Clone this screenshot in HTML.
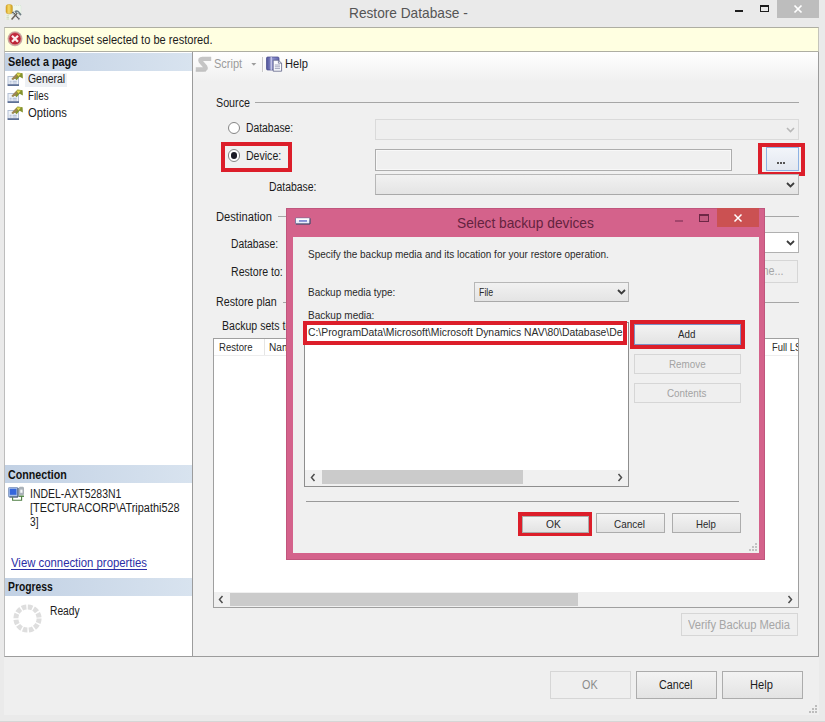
<!DOCTYPE html>
<html>
<head>
<meta charset="utf-8">
<title>Restore Database</title>
<style>
html,body{margin:0;padding:0;}
body{width:825px;height:722px;overflow:hidden;background:#eaeaea;font-family:"Liberation Sans",sans-serif;font-size:12px;color:#1c1c1c;position:relative;}
.a{position:absolute;white-space:nowrap;}
.t{position:absolute;white-space:nowrap;transform-origin:0 50%;}
.btn{position:absolute;box-sizing:border-box;border:1px solid #acacac;background:linear-gradient(#f3f3f3,#e3e3e3);}
.btn.dis{border-color:#d6d6d6;background:#efefef;}
.combo{position:absolute;box-sizing:border-box;border:1px solid #b7b7b7;border-bottom-color:#a9a9a9;background:linear-gradient(#f1f1f1,#e4e4e4);}
.combo.dis{border-color:#dadada;background:#efefef;}
.hr{position:absolute;height:1px;background:#a6a6a6;}
.radio{width:12.6px;height:12.6px;box-sizing:border-box;border:1px solid #858585;border-radius:50%;background:#fff;}
.radio i{position:absolute;left:2px;top:2px;width:6.6px;height:6.6px;border-radius:50%;background:#1c1c26;}
.red{position:absolute;box-sizing:border-box;border:4px solid #dc1e2a;}
.hdr{position:absolute;left:5px;width:187px;height:18px;background:linear-gradient(90deg,#c2d1e4,#d8e3ef);}
</style>
</head>
<body>

<!-- window client area -->
<div class="a" style="left:4px;top:27px;width:815px;height:688px;background:#efefef;"></div>
<div class="a" style="left:0;top:721px;width:825px;height:1px;background:#d6d6d6;"></div>

<!-- ===== title bar ===== -->
<svg class="a" style="left:4px;top:3px" width="20" height="19" viewBox="0 0 20 19">
  <rect x="8" y="2.5" width="9" height="9" fill="#eef6ec" stroke="#cfe0cf" stroke-width="0.6" stroke-dasharray="1 1"/>
  <rect x="1.5" y="11.5" width="6" height="5" fill="#eef4e6"/>
  <path d="M2.5 12.8 H5 M2.5 14.5 H5 M2.5 16 H5" stroke="#c8d4b8" stroke-width="0.8"/>
  <defs><linearGradient id="cy" x1="0" x2="1"><stop offset="0" stop-color="#d9a21e"/><stop offset="0.45" stop-color="#f6dc6c"/><stop offset="1" stop-color="#cf9a1c"/></linearGradient></defs>
  <rect x="2" y="1.6" width="6.4" height="9.2" rx="2.2" fill="url(#cy)" stroke="#c79a2a" stroke-width="0.5"/>
  <path d="M8.6 9 L15.6 16.6" stroke="#4c4f55" stroke-width="1.7" stroke-dasharray="1.2 0.5"/>
  <path d="M7.6 16.6 L13.6 9.6" stroke="#6b6257" stroke-width="1.5"/>
  <path d="M10.4 8.2 Q13.4 6 16 9.4 L17.6 11.6 L16.2 12.8 L14.6 10.6 Q13 9.4 11.4 10 Z" fill="#6f7f86"/>
  <path d="M12.6 9.2 Q13.6 8.6 14.6 9.8 L13.4 10.6 Z" fill="#dfe7ea"/>
</svg>
<div class="a" style="left:735px;top:10px;width:8px;height:2px;background:#1e1e1e;"></div>
<div class="a" style="left:760px;top:5px;width:9px;height:7px;box-sizing:border-box;border:1px solid #1e1e1e;border-top-width:2px;"></div>
<div class="a" style="left:777px;top:0;width:42px;height:18px;background:#bdbdbd;"></div>
<svg class="a" style="left:793px;top:4px" width="10" height="10" viewBox="0 0 10 10"><path d="M1.5 1.5 L8.5 8.5 M8.5 1.5 L1.5 8.5" stroke="#fff" stroke-width="1.7"/></svg>

<!-- ===== banner ===== -->
<div class="a" style="left:4px;top:27px;width:815px;height:25px;box-sizing:border-box;border:1px solid #aeaea2;border-left-color:#c4c4bb;border-right-color:#c4c4bb;background:#ffffe1;"></div>
<svg class="a" style="left:7px;top:31px" width="16" height="16" viewBox="0 0 16 16">
  <defs><radialGradient id="er" cx="0.5" cy="0.45" r="0.6"><stop offset="0" stop-color="#d23a4c"/><stop offset="1" stop-color="#b0162a"/></radialGradient></defs>
  <circle cx="8" cy="7.7" r="7.5" fill="#c9ada6"/>
  <circle cx="8" cy="7.7" r="6.1" fill="url(#er)" stroke="#d98a8c" stroke-width="0.8"/>
  <path d="M5 4.7 L11 10.7 M11 4.7 L5 10.7" stroke="#fdeeee" stroke-width="2.2"/>
</svg>

<!-- ===== left panel ===== -->
<div class="a" style="left:4px;top:52px;width:189px;height:605px;box-sizing:border-box;border:1px solid #9c9c9c;border-left-color:#bdbdbd;border-top:none;background:#fff;"></div>
<div class="hdr" style="top:53px;"></div>
<div class="a" style="left:25px;top:73px;width:42px;height:14px;background:#edf0f4;"></div>
<div class="hdr" style="top:465px;"></div>
<div class="hdr" style="top:578px;"></div>

<!-- ===== right panel ===== -->
<div class="a" style="left:193px;top:52px;width:626px;height:605px;box-sizing:border-box;border-right:1px solid #9c9c9c;border-bottom:1px solid #9c9c9c;background:#f0f0f0;"></div>
<div class="a" style="left:193px;top:52px;width:625px;height:30px;background:linear-gradient(#ffffff,#f0f0f0);"></div>

<svg class="a" style="left:7px;top:72px" width="17" height="15" viewBox="0 0 17 15">
  <rect x="1" y="4.5" width="10.5" height="8.5" fill="#eef2f8" stroke="#b4c0d4" stroke-width="1"/>
  <rect x="0.6" y="12.4" width="11.4" height="1.4" fill="#3f5581"/>
  <path d="M2.6 9.3 H4.6 M5.6 9.3 H9.8 M2.6 11 H4.6 M5.6 11 H9.8" stroke="#93a5c4" stroke-width="0.7"/>
  <path d="M4.5 7 L9 2.2 L10.5 0.6 L15.6 1.2 L15.9 6.6 L12.6 4.8 L9.6 8.2 L8 6.4 L6 7.8 Z" fill="#85932f"/>
  <path d="M4.5 7 L9 2.2 L10.6 4 L8 6.4 L6 7.8 Z" fill="#a08455"/>
  <path d="M9.4 1.6 L14 1.4 L11.4 4.6 Z" fill="#e9db55"/>
</svg>
<svg class="a" style="left:7px;top:89px" width="17" height="15" viewBox="0 0 17 15">
  <rect x="1" y="4.5" width="10.5" height="8.5" fill="#eef2f8" stroke="#b4c0d4" stroke-width="1"/>
  <rect x="0.6" y="12.4" width="11.4" height="1.4" fill="#3f5581"/>
  <path d="M2.6 9.3 H4.6 M5.6 9.3 H9.8 M2.6 11 H4.6 M5.6 11 H9.8" stroke="#93a5c4" stroke-width="0.7"/>
  <path d="M4.5 7 L9 2.2 L10.5 0.6 L15.6 1.2 L15.9 6.6 L12.6 4.8 L9.6 8.2 L8 6.4 L6 7.8 Z" fill="#85932f"/>
  <path d="M4.5 7 L9 2.2 L10.6 4 L8 6.4 L6 7.8 Z" fill="#a08455"/>
  <path d="M9.4 1.6 L14 1.4 L11.4 4.6 Z" fill="#e9db55"/>
</svg>
<svg class="a" style="left:7px;top:106px" width="17" height="15" viewBox="0 0 17 15">
  <rect x="1" y="4.5" width="10.5" height="8.5" fill="#eef2f8" stroke="#b4c0d4" stroke-width="1"/>
  <rect x="0.6" y="12.4" width="11.4" height="1.4" fill="#3f5581"/>
  <path d="M2.6 9.3 H4.6 M5.6 9.3 H9.8 M2.6 11 H4.6 M5.6 11 H9.8" stroke="#93a5c4" stroke-width="0.7"/>
  <path d="M4.5 7 L9 2.2 L10.5 0.6 L15.6 1.2 L15.9 6.6 L12.6 4.8 L9.6 8.2 L8 6.4 L6 7.8 Z" fill="#85932f"/>
  <path d="M4.5 7 L9 2.2 L10.6 4 L8 6.4 L6 7.8 Z" fill="#a08455"/>
  <path d="M9.4 1.6 L14 1.4 L11.4 4.6 Z" fill="#e9db55"/>
</svg>
<svg class="a" style="left:8px;top:486px" width="17" height="16" viewBox="0 0 17 16">
  <rect x="0.5" y="1.5" width="9.5" height="9.5" rx="0.8" fill="#a9c0e6" stroke="#7d94bd" stroke-width="0.8"/>
  <rect x="1.8" y="2.8" width="6.6" height="6" fill="#3566dc"/>
  <path d="M10 2 V11 H1.5" stroke="#3b4a63" stroke-width="1" fill="none"/>
  <rect x="11.3" y="1.2" width="4.2" height="7.6" rx="0.6" fill="#aab2ba" stroke="#8d959d" stroke-width="0.6"/>
  <rect x="12.3" y="3.6" width="2.2" height="3.2" fill="#f4f6f8"/>
  <path d="M11 10.2 H16" stroke="#3f7a35" stroke-width="1.3"/>
  <path d="M4.6 11.2 V14.2 H13.6 V10" stroke="#4f7f44" stroke-width="1.1" fill="none"/>
</svg>
<svg class="a" style="left:13px;top:604px" width="29" height="29" viewBox="0 0 29 29">
  <circle cx="14.5" cy="14.5" r="11.6" fill="none" stroke="#dedede" stroke-width="5" stroke-dasharray="4.6 1.47"/>
</svg>
<!-- toolbar icons -->
<svg class="a" style="left:195px;top:56px" width="17" height="16" viewBox="0 0 17 16">
  <path d="M16.2 2.8 H7.4 Q4.2 2.8 5.8 5.6 L10.2 10.6 Q11.8 13.4 8.6 13.4 H0.8" fill="none" stroke="#c5c5c5" stroke-width="4.2" stroke-linejoin="round"/>
  <path d="M0.8 15 H11" stroke="#bcbcbc" stroke-width="1"/>
</svg>
<svg class="a" style="left:251px;top:63px" width="6" height="3" viewBox="0 0 6 3"><path d="M0.3 0 H5.3 L2.8 2.8 Z" fill="#9d9d9d"/></svg>
<div class="a" style="left:262px;top:57px;width:1px;height:15px;background:#c9c9c9;"></div>
<div class="a" style="left:263px;top:57px;width:1px;height:15px;background:#fbfbfb;"></div>
<svg class="a" style="left:266px;top:56px" width="17" height="16" viewBox="0 0 17 16">
  <defs><linearGradient id="bk" x1="0" x2="1"><stop offset="0" stop-color="#4f5299"/><stop offset="0.45" stop-color="#9094cf"/><stop offset="1" stop-color="#6266ad"/></linearGradient></defs>
  <rect x="0.5" y="1" width="12.5" height="13" rx="1.2" fill="url(#bk)" stroke="#45488a" stroke-width="0.7"/>
  <path d="M7.2 4.2 H12.4 L15.6 7.2 V15.2 H7.2 Z" fill="#fafbfe" stroke="#5d6286" stroke-width="0.8"/>
  <path d="M12.4 4.2 V7.2 H15.6" fill="none" stroke="#5d6286" stroke-width="0.7"/>
  <path d="M8.8 9 H14 M8.8 10.8 H14 M8.8 12.6 H14" stroke="#8c90ac" stroke-width="0.8"/>
  <rect x="4.6" y="1" width="1.2" height="13" fill="#e9eaf6" opacity="0.75"/>
</svg>
<!-- resize grips -->
<svg class="a" style="left:808px;top:704px" width="10" height="10" viewBox="0 0 10 10"><g fill="#bdbdbd"><rect x="7" y="1" width="2" height="2"/><rect x="4" y="4" width="2" height="2"/><rect x="7" y="4" width="2" height="2"/><rect x="1" y="7" width="2" height="2"/><rect x="4" y="7" width="2" height="2"/><rect x="7" y="7" width="2" height="2"/></g></svg>

<!-- source group -->
<div class="hr" style="left:255px;top:102px;width:544px;"></div>
<div class="a radio" style="left:227.7px;top:121.7px;"></div>
<div class="combo dis" style="left:375px;top:119px;width:424px;height:21px;"></div>
<svg class="a" style="left:786px;top:127px" width="9" height="6" viewBox="0 0 9 6"><path d="M1 1 L4.5 4.5 L8 1" stroke="#b8b8b8" stroke-width="1.6" fill="none"/></svg>

<div class="red" style="left:221.2px;top:141.7px;width:70.6px;height:29.9px;"></div>
<div class="a radio" style="left:227.7px;top:149px;"><i></i></div>
<div class="a" style="left:375px;top:149px;width:357px;height:22px;box-sizing:border-box;border:1px solid #adadad;background:#f0f0f0;box-shadow:inset 0 0 0 1px #f8f8f8;"></div>
<div class="red" style="left:758px;top:142.5px;width:47px;height:33.5px;"></div>
<div class="btn" style="left:766px;top:147px;width:33px;height:24px;border-color:#8db2e3;background:linear-gradient(#f2f5fa,#e3e8f0);"></div>
<div class="a" style="left:777px;top:162px;width:1.6px;height:1.8px;background:#555;box-shadow:3px 0 #555,6px 0 #555;"></div>

<div class="combo" style="left:375px;top:174px;width:424px;height:21px;"></div>
<svg class="a" style="left:786px;top:182px" width="9" height="6" viewBox="0 0 9 6"><path d="M1 1 L4.5 4.5 L8 1" stroke="#3c3c3c" stroke-width="1.8" fill="none"/></svg>

<!-- destination group -->
<div class="hr" style="left:278px;top:216px;width:521px;"></div>
<div class="a" style="left:375px;top:232px;width:424px;height:21px;box-sizing:border-box;border:1px solid #b0b0b0;background:#fff;"></div>
<svg class="a" style="left:786px;top:240px" width="9" height="6" viewBox="0 0 9 6"><path d="M1 1 L4.5 4.5 L8 1" stroke="#3c3c3c" stroke-width="1.8" fill="none"/></svg>
<div class="btn dis" style="left:700px;top:260px;width:98px;height:23px;"></div>

<!-- restore plan -->
<div class="hr" style="left:283px;top:302px;width:516px;"></div>
<div class="a" style="left:213px;top:338px;width:586px;height:270px;box-sizing:border-box;border:1px solid #9f9f9f;background:#fff;"></div>
<div class="a" style="left:264px;top:339px;width:1px;height:17px;background:#e5e5e5;"></div>
<div class="a" style="left:214px;top:355px;width:584px;height:1px;background:#ededed;"></div>
<!-- grid h-scrollbar -->
<div class="a" style="left:214px;top:592px;width:584px;height:15px;background:#f0f0f0;"></div>
<div class="a" style="left:230px;top:593px;width:348px;height:13px;background:#cbcbcb;"></div>
<svg class="a" style="left:218px;top:595px" width="6" height="9" viewBox="0 0 6 9"><path d="M4.5 1 L1.5 4.5 L4.5 8" stroke="#4d4d4d" stroke-width="1.5" fill="none"/></svg>
<svg class="a" style="left:787px;top:595px" width="6" height="9" viewBox="0 0 6 9"><path d="M1.5 1 L4.5 4.5 L1.5 8" stroke="#4d4d4d" stroke-width="1.5" fill="none"/></svg>

<div class="btn dis" style="left:681px;top:613px;width:117px;height:23px;"></div>

<!-- bottom buttons -->
<div class="btn dis" style="left:550px;top:671px;width:81px;height:28px;"></div>
<div class="btn" style="left:636px;top:671px;width:81px;height:28px;"></div>
<div class="btn" style="left:722px;top:671px;width:81px;height:28px;"></div>

<div class="t" style="left:349.4px;top:4px;font-size:14.5px;line-height:18px;height:18px;transform:scaleX(0.9441);color:#555;">Restore Database -</div>
<div class="t" style="left:25.9px;top:33px;font-size:12px;line-height:15px;height:15px;transform:scaleX(0.9227);">No backupset selected to be restored.</div>
<div class="t" style="left:7.8px;top:55px;font-size:12px;line-height:15px;height:15px;transform:scaleX(0.9020);font-weight:bold;color:#111;">Select a page</div>
<div class="t" style="left:27.9px;top:72px;font-size:12px;line-height:15px;height:15px;transform:scaleX(0.8688);">General</div>
<div class="t" style="left:27.9px;top:89px;font-size:12px;line-height:15px;height:15px;transform:scaleX(0.8128);">Files</div>
<div class="t" style="left:27.9px;top:106px;font-size:12px;line-height:15px;height:15px;transform:scaleX(0.9381);">Options</div>
<div class="t" style="left:8.0px;top:468px;font-size:12px;line-height:15px;height:15px;transform:scaleX(0.8894);font-weight:bold;color:#111;">Connection</div>
<div class="t" style="left:30.3px;top:487px;font-size:12px;line-height:15px;height:15px;transform:scaleX(0.8728);">INDEL-AXT5283N1</div>
<div class="t" style="left:30.3px;top:501px;font-size:12px;line-height:15px;height:15px;transform:scaleX(0.9082);">[TECTURACORP\ATripathi528</div>
<div class="t" style="left:30.3px;top:515px;font-size:12px;line-height:15px;height:15px;transform:scaleX(0.8487);">3]</div>
<div class="t" style="left:11.4px;top:556px;font-size:12px;line-height:15px;height:15px;transform:scaleX(0.9453);color:#2b2ea6;text-decoration:underline;text-underline-offset:2px;">View connection properties</div>
<div class="t" style="left:8.0px;top:580px;font-size:12px;line-height:15px;height:15px;transform:scaleX(0.8610);font-weight:bold;color:#111;">Progress</div>
<div class="t" style="left:49.7px;top:604px;font-size:12px;line-height:15px;height:15px;transform:scaleX(0.8533);">Ready</div>
<div class="t" style="left:213.6px;top:57px;font-size:12px;line-height:15px;height:15px;transform:scaleX(0.9189);color:#9c9c9c;">Script</div>
<div class="t" style="left:284.9px;top:57px;font-size:12px;line-height:15px;height:15px;transform:scaleX(0.9276);">Help</div>
<div class="t" style="left:215.5px;top:96px;font-size:12px;line-height:15px;height:15px;transform:scaleX(0.8940);">Source</div>
<div class="t" style="left:246.2px;top:121px;font-size:12px;line-height:15px;height:15px;transform:scaleX(0.8628);">Database:</div>
<div class="t" style="left:246.2px;top:149px;font-size:12px;line-height:15px;height:15px;transform:scaleX(0.8797);">Device:</div>
<div class="t" style="left:268.7px;top:180px;font-size:12px;line-height:15px;height:15px;transform:scaleX(0.8683);">Database:</div>
<div class="t" style="left:215.6px;top:210px;font-size:12px;line-height:15px;height:15px;transform:scaleX(0.9309);">Destination</div>
<div class="t" style="left:231.2px;top:237px;font-size:12px;line-height:15px;height:15px;transform:scaleX(0.8592);">Database:</div>
<div class="t" style="left:231.2px;top:265px;font-size:12px;line-height:15px;height:15px;transform:scaleX(0.8824);">Restore to:</div>
<div class="t" style="left:215.6px;top:295px;font-size:12px;line-height:15px;height:15px;transform:scaleX(0.8935);">Restore plan</div>
<div class="t" style="left:221.6px;top:319px;font-size:12px;line-height:15px;height:15px;transform:scaleX(0.8799);">Backup sets to restore:</div>
<div class="t" style="left:733.7px;top:264px;font-size:12px;line-height:15px;height:15px;transform:scaleX(0.9015);color:#a6a6a6;">Timeline...</div>
<div class="t" style="left:687.8px;top:618px;font-size:12px;line-height:15px;height:15px;transform:scaleX(0.9324);color:#a6a6a6;">Verify Backup Media</div>
<div class="t" style="left:582.1px;top:678px;font-size:12px;line-height:15px;height:15px;transform:scaleX(0.8995);color:#8c8c8c;">OK</div>
<div class="t" style="left:659.2px;top:678px;font-size:12px;line-height:15px;height:15px;transform:scaleX(0.8967);">Cancel</div>
<div class="t" style="left:749.7px;top:678px;font-size:12px;line-height:15px;height:15px;transform:scaleX(0.9276);">Help</div>
<div class="t" style="left:218.7px;top:340px;font-size:11px;line-height:14px;height:14px;transform:scaleX(0.8694);color:#2a2a2a;">Restore</div>
<div class="t" style="left:269.3px;top:340px;font-size:11px;line-height:14px;height:14px;transform:scaleX(0.9201);color:#2a2a2a;">Name</div>
<div class="t" style="left:772.4px;top:340px;font-size:11px;line-height:14px;height:14px;transform:scaleX(0.8533);color:#2a2a2a;">Full LSN</div>
<div class="a" style="left:798px;top:339px;width:1px;height:20px;background:#9f9f9f;"></div>
<div class="a" style="left:799px;top:339px;width:19px;height:20px;background:#f0f0f0;"></div>

<!-- ===== Select backup devices dialog ===== -->
<div class="a" style="left:285.5px;top:207.6px;width:479.6px;height:352.8px;box-sizing:border-box;border:1px solid #c0567d;background:#d4628b;"></div>
<div class="a" style="left:292.8px;top:236.8px;width:465.9px;height:315.9px;background:#f0f0f0;"></div>
<svg class="a" style="left:295px;top:217px" width="16" height="8" viewBox="0 0 16 8"><rect x="0.5" y="1" width="14.5" height="6" rx="0.8" fill="#e9edfa" stroke="#6a6f98" stroke-width="0.8"/><rect x="1" y="1.4" width="13.4" height="2" fill="#ffffff"/><rect x="4" y="3.3" width="8" height="1.3" fill="#5766c6"/><path d="M1 7 H15 V1.4" stroke="#3d3f5e" stroke-width="0.9" fill="none"/></svg>
<div class="a" style="left:675px;top:220px;width:8px;height:2px;background:#a3456c;"></div>
<div class="a" style="left:699px;top:214px;width:10px;height:8px;box-sizing:border-box;border:1px solid #6d2745;border-top-width:2px;background:#c35a80;"></div>
<div class="a" style="left:717px;top:208px;width:41.7px;height:19px;background:#cb5152;"></div>
<svg class="a" style="left:733px;top:213px" width="10" height="10" viewBox="0 0 10 10"><path d="M1.5 1.5 L8.5 8.5 M8.5 1.5 L1.5 8.5" stroke="#fff" stroke-width="1.5"/></svg>

<div class="combo" style="left:474px;top:282px;width:155px;height:20px;"></div>
<svg class="a" style="left:617px;top:289px" width="9" height="6" viewBox="0 0 9 6"><path d="M1 1 L4.5 4.5 L8 1" stroke="#3c3c3c" stroke-width="1.8" fill="none"/></svg>

<div class="a" style="left:304px;top:322px;width:325px;height:165px;box-sizing:border-box;border:1px solid #8e8e8e;background:#fff;"></div>
<div class="red" style="left:302.7px;top:320.7px;width:324.3px;height:24.7px;"></div>
<!-- list h-scrollbar -->
<div class="a" style="left:305px;top:470px;width:323px;height:16px;background:#f0f0f0;"></div>
<div class="a" style="left:322px;top:470.4px;width:200.6px;height:13.4px;background:#cbcbcb;"></div>
<svg class="a" style="left:310px;top:473px" width="6" height="9" viewBox="0 0 6 9"><path d="M4.5 1 L1.5 4.5 L4.5 8" stroke="#4d4d4d" stroke-width="1.5" fill="none"/></svg>
<svg class="a" style="left:616.5px;top:473px" width="6" height="9" viewBox="0 0 6 9"><path d="M1.5 1 L4.5 4.5 L1.5 8" stroke="#4d4d4d" stroke-width="1.5" fill="none"/></svg>

<div class="red" style="left:629.5px;top:320.2px;width:115.2px;height:28.8px;"></div>
<div class="btn" style="left:634px;top:324px;width:107px;height:21px;border-color:#7c8fc4;"></div>
<div class="btn dis" style="left:634px;top:354px;width:107px;height:20px;"></div>
<div class="btn dis" style="left:634px;top:383px;width:107px;height:20px;"></div>

<div class="hr" style="left:306px;top:501px;width:433px;background:#9a9a9a;"></div>
<div class="red" style="left:518.1px;top:511.7px;width:74.2px;height:24.6px;"></div>
<div class="btn" style="left:522px;top:516px;width:67px;height:17px;"></div>
<div class="btn" style="left:596px;top:513px;width:69px;height:20px;"></div>
<div class="btn" style="left:672px;top:513px;width:69px;height:20px;"></div>

<svg class="a" style="left:748px;top:542px" width="10" height="10" viewBox="0 0 10 10"><g fill="#c2c2c2"><rect x="7" y="1" width="2" height="2"/><rect x="4" y="4" width="2" height="2"/><rect x="7" y="4" width="2" height="2"/><rect x="1" y="7" width="2" height="2"/><rect x="4" y="7" width="2" height="2"/><rect x="7" y="7" width="2" height="2"/></g></svg>
<div class="t" style="left:456.7px;top:214px;font-size:14.5px;line-height:18px;height:18px;transform:scaleX(0.9488);color:#64233f;">Select backup devices</div>
<div class="t" style="left:307.6px;top:247px;font-size:11px;line-height:14px;height:14px;transform:scaleX(0.9059);color:#2a2a2a;">Specify the backup media and its location for your restore operation.</div>
<div class="t" style="left:307.6px;top:285px;font-size:11px;line-height:14px;height:14px;transform:scaleX(0.9045);color:#2a2a2a;">Backup media type:</div>
<div class="t" style="left:478.5px;top:285px;font-size:11px;line-height:14px;height:14px;transform:scaleX(0.8007);color:#2a2a2a;">File</div>
<div class="t" style="left:307.6px;top:308px;font-size:11px;line-height:14px;height:14px;transform:scaleX(0.9125);color:#2a2a2a;">Backup media:</div>
<div class="t" style="left:308.0px;top:325px;font-size:11px;line-height:14px;height:14px;transform:scaleX(0.9428);color:#2a2a2a;">C:\ProgramData\Microsoft\Microsoft Dynamics NAV\80\Database\De</div>
<div class="t" style="left:677.6px;top:327px;font-size:11px;line-height:14px;height:14px;transform:scaleX(0.8887);color:#2a2a2a;">Add</div>
<div class="t" style="left:668.5px;top:357px;font-size:11px;line-height:14px;height:14px;transform:scaleX(0.8958);color:#a3a3a3;">Remove</div>
<div class="t" style="left:666.8px;top:386px;font-size:11px;line-height:14px;height:14px;transform:scaleX(0.8948);color:#a3a3a3;">Contents</div>
<div class="t" style="left:546.2px;top:517px;font-size:11px;line-height:14px;height:14px;transform:scaleX(0.9305);color:#2a2a2a;">OK</div>
<div class="t" style="left:614.0px;top:517px;font-size:11px;line-height:14px;height:14px;transform:scaleX(0.9022);color:#2a2a2a;">Cancel</div>
<div class="t" style="left:696.0px;top:517px;font-size:11px;line-height:14px;height:14px;transform:scaleX(0.8751);color:#2a2a2a;">Help</div>

</body>
</html>
